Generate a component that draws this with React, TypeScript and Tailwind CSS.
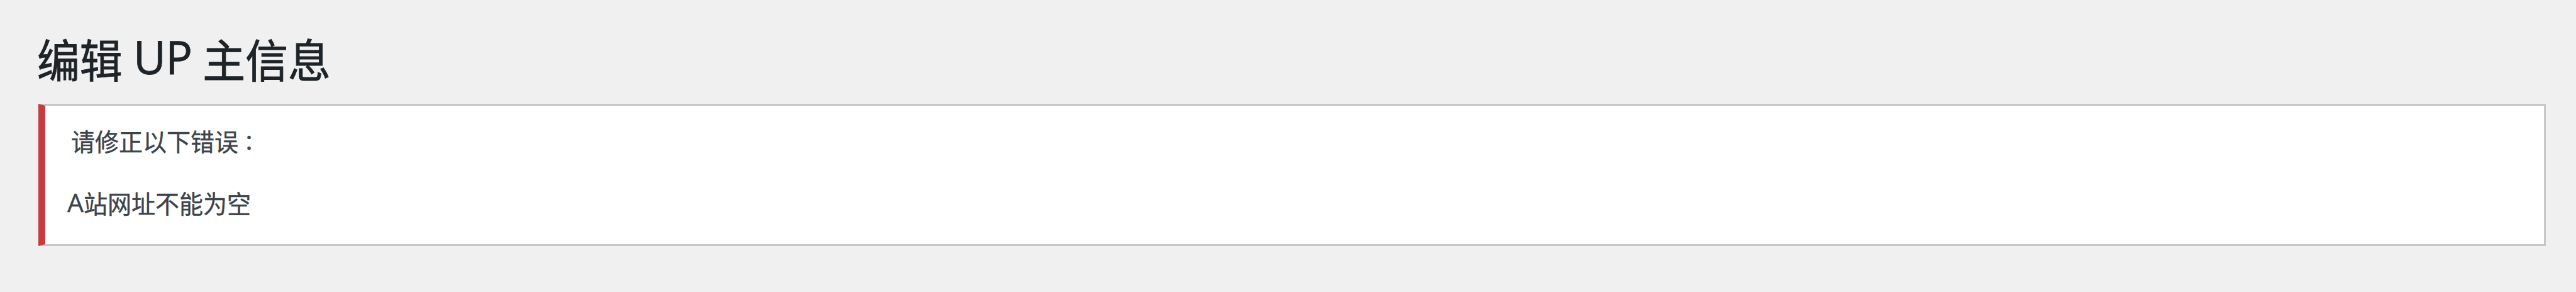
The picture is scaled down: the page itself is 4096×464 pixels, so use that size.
export default function App() {
  return (
    <main className="h-[464px] w-[4096px] overflow-hidden bg-[#f0f0f0] pr-[48px] pl-[61px] font-['Open_Sans','Noto_Sans_CJK_SC',sans-serif]">
      <h1 className="-ml-[2px] flex h-[165px] items-start pt-[49px] text-[67.8px] leading-[96px] font-normal whitespace-pre text-[#1d2327] [-webkit-text-stroke:0.9px_#1d2327]">
        <span className="origin-[0_74px] scale-y-[1.05]">编辑 </span>
        <span className="-mt-[6px] origin-[0_75px] scale-y-[1.04] text-[70.5px]">UP </span>
        <span className="-ml-[2px] origin-[0_74px] scale-y-[1.05]">主信息</span>
      </h1>
      <section className="h-[226px] border-[3px] border-l-[11px] border-[#c6c7c8] border-l-[#c83c3f] bg-white text-[38px] leading-[54px] text-[#3c434a] [-webkit-text-stroke:0.4px_#3c434a]">
        <p className="flex items-start pt-[30px] pl-[41px]">
          <span className="origin-[0_42px] scale-y-[1.03]">请修正以下错误</span>
          <span className="mt-[1px] font-['Noto_Sans_CJK_TC',sans-serif] text-[34px]">：</span>
        </p>
        <p className="-mt-[1px] flex items-start pt-[45px] pl-[35px]">
          <span className="-mt-[3px] text-[41px]">A</span>
          <span className="origin-[0_42px] scale-y-[1.04]">站网址不能为空</span>
        </p>
      </section>
    </main>
  );
}
